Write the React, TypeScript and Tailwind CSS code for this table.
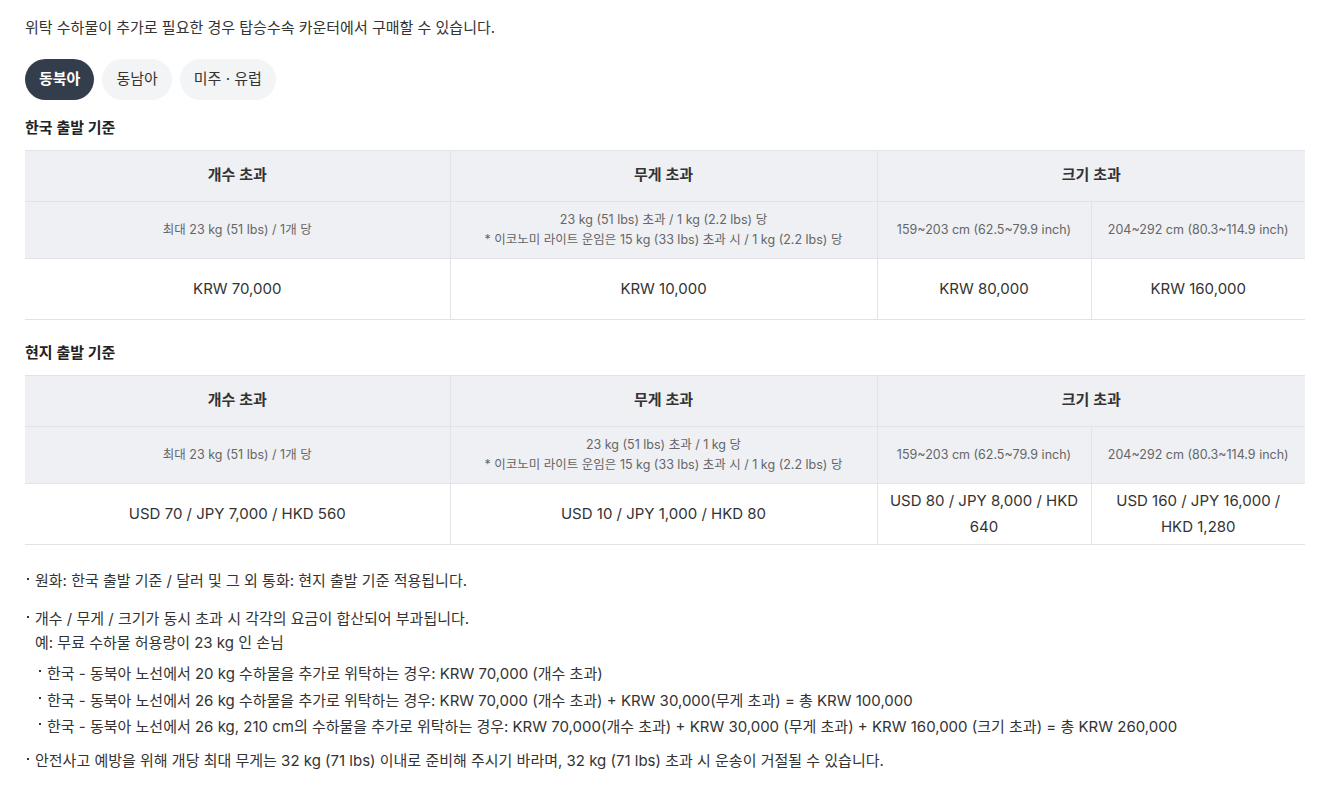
const font = { fontFamily: 'Inter, "Noto Sans CJK KR", sans-serif' }

interface FeeTableProps {
  title: string
  weightLine: string
  values: string[]
}

function FeeTable({ title, weightLine, values }: FeeTableProps) {
  return (
    <div>
      <h3 className="text-[15px] leading-[20px] font-semibold text-[#222]">{title}</h3>
      <table className="mt-[12px] w-[1280px] table-fixed border-collapse">
        <colgroup>
          <col className="w-[425px]" />
          <col className="w-[427px]" />
          <col className="w-[214px]" />
          <col className="w-[214px]" />
        </colgroup>
        <thead>
          <tr className="h-[51px] bg-[#eef0f4] border-y border-[#e1e3e8] text-[15px] leading-[20px]">
            <th className="pb-[2px] font-semibold text-[#333]">개수 초과</th>
            <th className="pb-[2px] border-l border-[#e1e3e8] font-semibold text-[#333]">무게 초과</th>
            <th colSpan={2} className="pb-[2px] border-l border-[#e1e3e8] font-semibold text-[#333]">
              크기 초과
            </th>
          </tr>
          <tr className="h-[57px] bg-[#eef0f4] border-b border-[#e1e3e8] text-[12.5px] leading-[20px] font-normal text-[#666]">
            <td className="text-center">최대 23 kg (51 lbs) / 1개 당</td>
            <td className="border-l border-[#e1e3e8] text-center">
              {weightLine}
              <br />* 이코노미 라이트 운임은 15 kg (33 lbs) 초과 시 / 1 kg (2.2 lbs) 당
            </td>
            <td className="border-l border-[#e1e3e8] text-center">159~203 cm (62.5~79.9 inch)</td>
            <td className="border-l border-[#e1e3e8] text-center">204~292 cm (80.3~114.9 inch)</td>
          </tr>
        </thead>
        <tbody>
          <tr className="h-[61px] border-b border-[#e1e3e8] text-[15px] leading-[26px] text-[#333]">
            {values.map((v, i) => (
              <td key={i} className={`px-[12px] text-center ${i > 0 ? 'border-l border-[#e1e3e8]' : ''}`}>
                {v}
              </td>
            ))}
          </tr>
        </tbody>
      </table>
    </div>
  )
}

function Dot() {
  return <span className="mt-[9px] mr-[6px] h-[2px] w-[2px] shrink-0 bg-[#333]" />
}

export default function App() {
  return (
    <div style={font} className="min-h-[796px] bg-white px-[25px] pt-[18px] text-[#333]">
      <p className="text-[15px] leading-[20px] text-[#333]">
        위탁 수하물이 추가로 필요한 경우 탑승수속 카운터에서 구매할 수 있습니다.
      </p>

      <div className="mt-[21px] flex gap-[8px]">
        <button className="h-[41px] rounded-full bg-[#333d4b] px-[14px] text-[15px] font-semibold text-white">
          동북아
        </button>
        <button className="h-[41px] rounded-full bg-[#f3f4f6] px-[14px] text-[15px] text-[#333]">동남아</button>
        <button className="h-[41px] rounded-full bg-[#f3f4f6] px-[14px] text-[15px] text-[#333]">
          미주 · 유럽
        </button>
      </div>

      <div className="mt-[18px]">
        <FeeTable
          title="한국 출발 기준"
          weightLine="23 kg (51 lbs) 초과 / 1 kg (2.2 lbs) 당"
          values={['KRW 70,000', 'KRW 10,000', 'KRW 80,000', 'KRW 160,000']}
        />
      </div>

      <div className="mt-[23px]">
        <FeeTable
          title="현지 출발 기준"
          weightLine="23 kg (51 lbs) 초과 / 1 kg 당"
          values={[
            'USD 70 / JPY 7,000 / HKD 560',
            'USD 10 / JPY 1,000 / HKD 80',
            'USD 80 / JPY 8,000 / HKD 640',
            'USD 160 / JPY 16,000 / HKD 1,280',
          ]}
        />
      </div>

      <ul className="mt-[24px] text-[15px] leading-[24px] text-[#333]">
        <li className="flex pl-[2px]">
          <Dot />
          <span>원화: 한국 출발 기준 / 달러 및 그 외 통화: 현지 출발 기준 적용됩니다.</span>
        </li>
        <li className="mt-[14px] flex pl-[2px]">
          <Dot />
          <div>
            <p>개수 / 무게 / 크기가 동시 초과 시 각각의 요금이 합산되어 부과됩니다.</p>
            <p>예: 무료 수하물 허용량이 23 kg 인 손님</p>
            <ul className="mt-[6px] leading-[26.5px]">
              <li className="flex pl-[4px]">
                <Dot />
                <span>한국 - 동북아 노선에서 20 kg 수하물을 추가로 위탁하는 경우: KRW 70,000 (개수 초과)</span>
              </li>
              <li className="flex pl-[4px]">
                <Dot />
                <span>
                  한국 - 동북아 노선에서 26 kg 수하물을 추가로 위탁하는 경우: KRW 70,000 (개수 초과) + KRW
                  30,000(무게 초과) = 총 KRW 100,000
                </span>
              </li>
              <li className="flex pl-[4px]">
                <Dot />
                <span>
                  한국 - 동북아 노선에서 26 kg, 210 cm의 수하물을 추가로 위탁하는 경우: KRW 70,000(개수 초과) + KRW
                  30,000 (무게 초과) + KRW 160,000 (크기 초과) = 총 KRW 260,000
                </span>
              </li>
            </ul>
          </div>
        </li>
        <li className="mt-[8px] flex pl-[2px]">
          <Dot />
          <span>
            안전사고 예방을 위해 개당 최대 무게는 32 kg (71 lbs) 이내로 준비해 주시기 바라며, 32 kg (71 lbs) 초과 시
            운송이 거절될 수 있습니다.
          </span>
        </li>
      </ul>
    </div>
  )
}
